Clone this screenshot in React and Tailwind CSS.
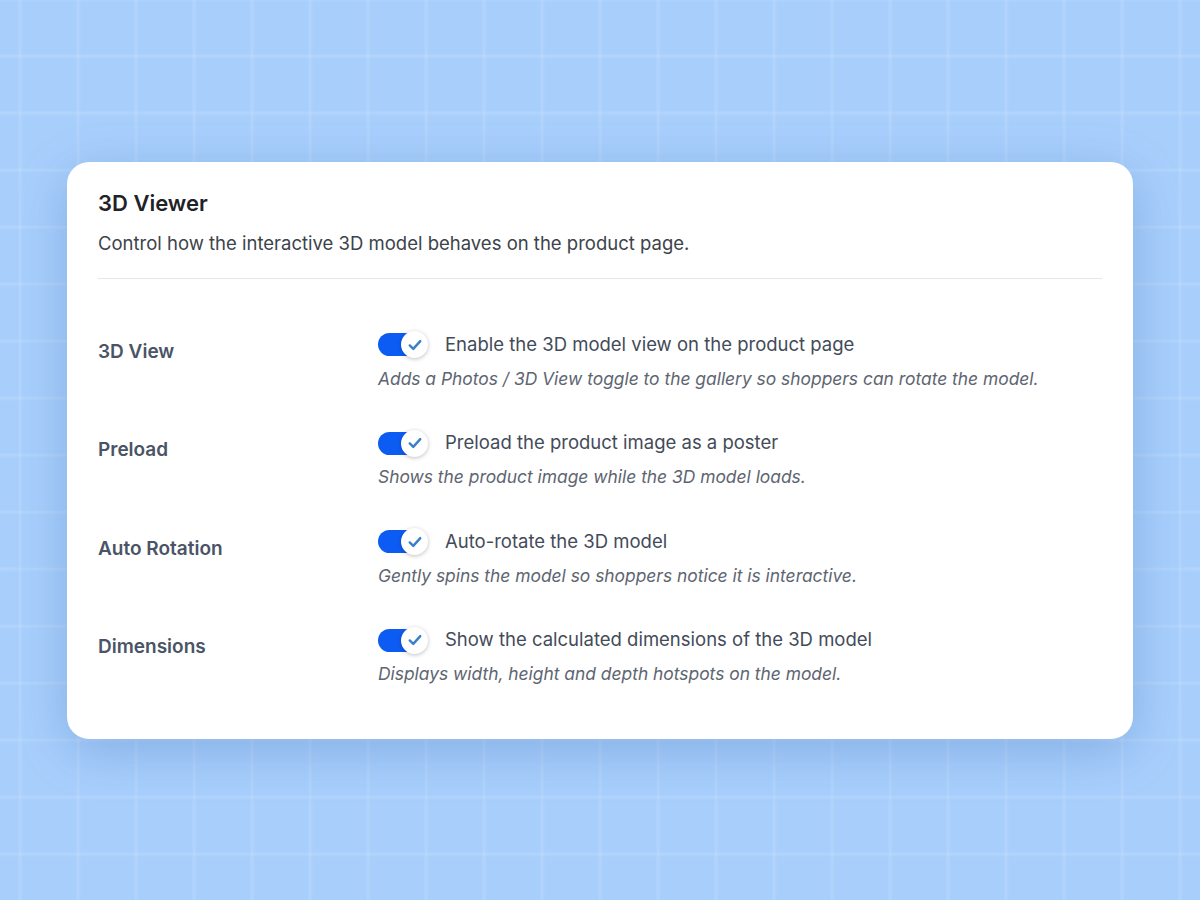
import React from "react";

const rows = [
  {
    label: "3D View",
    text: "Enable the 3D model view on the product page",
    hint: "Adds a Photos / 3D View toggle to the gallery so shoppers can rotate the model.",
  },
  {
    label: "Preload",
    text: "Preload the product image as a poster",
    hint: "Shows the product image while the 3D model loads.",
  },
  {
    label: "Auto Rotation",
    text: "Auto-rotate the 3D model",
    hint: "Gently spins the model so shoppers notice it is interactive.",
  },
  {
    label: "Dimensions",
    text: "Show the calculated dimensions of the 3D model",
    hint: "Displays width, height and depth hotspots on the model.",
  },
];

const Toggle = () => (
  <span className="relative inline-block w-[48px] h-[23px] rounded-full bg-[#0c5cf4] shrink-0">
    <span className="absolute right-[-2px] top-[-2px] w-[27px] h-[27px] rounded-full bg-white shadow-[0_1px_4px_rgba(0,0,0,0.25)] flex items-center justify-center">
      <svg width="16" height="16" viewBox="0 0 14 14" fill="none">
        <path
          d="M2.4 7.4 L5.5 10.4 L11.6 3.6"
          stroke="#3a7fc9"
          strokeWidth="2.1"
          strokeLinecap="round"
          strokeLinejoin="round"
        />
      </svg>
    </span>
  </span>
);

export default function App() {
  return (
    <div
      className="w-[1200px] h-[900px] flex items-center justify-center bg-[#a8cffc] bg-[linear-gradient(to_right,transparent_0,rgba(255,255,255,0.13)_2px,transparent_5px),linear-gradient(to_bottom,transparent_0,rgba(255,255,255,0.13)_2px,transparent_5px)] bg-[length:58px_57px] bg-[position:18px_-3px]"
      style={{ fontFamily: "Inter, 'Noto Sans', sans-serif" }}
    >
      <div className="w-[1066px] h-[577px] bg-white rounded-[22px] shadow-[0_12px_50px_rgba(40,90,170,0.28)] px-[31px] pt-[28px]">
        <h1 className="text-[22px] leading-[26px] font-semibold text-[#1f2328]">3D Viewer</h1>
        <p className="mt-[15px] text-[18.5px] leading-[24px] text-[#3c434a]">
          Control how the interactive 3D model behaves on the product page.
        </p>
        <div className="mt-[23px] h-px bg-[#e4e6ea]"></div>

        <div className="mt-[52px] flex flex-col gap-[38.5px]">
          {rows.map((r) => (
            <div key={r.label} className="flex">
              <div className="w-[280px] pt-[9px] text-[19px] leading-[24px] font-semibold text-[#4a5466]">
                {r.label}
              </div>
              <div className="flex flex-col">
                <label className="flex items-center h-[28px] gap-[19px] text-[18.5px] text-[#434b59]">
                  <Toggle />
                  <span>{r.text}</span>
                </label>
                <p className="mt-[8px] text-[17.4px] leading-[24px] italic text-[#5e6571]">{r.hint}</p>
              </div>
            </div>
          ))}
        </div>
      </div>
    </div>
  );
}
